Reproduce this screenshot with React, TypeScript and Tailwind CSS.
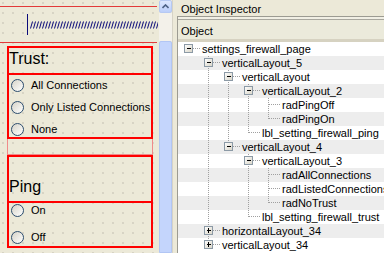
import React from "react";

type Node = { label: string; level: number; box: "" | "-" | "+" };

const tree: Node[] = [
  { label: "settings_firewall_page", level: 0, box: "-" },
  { label: "verticalLayout_5", level: 1, box: "-" },
  { label: "verticalLayout", level: 2, box: "-" },
  { label: "verticalLayout_2", level: 3, box: "-" },
  { label: "radPingOff", level: 4, box: "" },
  { label: "radPingOn", level: 4, box: "" },
  { label: "lbl_setting_firewall_ping", level: 3, box: "" },
  { label: "verticalLayout_4", level: 2, box: "-" },
  { label: "verticalLayout_3", level: 3, box: "-" },
  { label: "radAllConnections", level: 4, box: "" },
  { label: "radListedConnections", level: 4, box: "" },
  { label: "radNoTrust", level: 4, box: "" },
  { label: "lbl_setting_firewall_trust", level: 3, box: "" },
  { label: "horizontalLayout_34", level: 1, box: "+" },
  { label: "verticalLayout_34", level: 1, box: "+" },
];

// true when a later row sits at the same level before the tree climbs out
const hasNextSibling = (i: number) => {
  for (let j = i + 1; j < tree.length; j++) {
    if (tree[j].level < tree[i].level) return false;
    if (tree[j].level === tree[i].level) return true;
  }
  return false;
};

const ancestorAt = (i: number, level: number) => {
  for (let j = i - 1; j >= 0; j--) if (tree[j].level === level) return j;
  return -1;
};

function Branches({ index }: { index: number }) {
  const { level, box } = tree[index];
  const width = 24 + level * 20;
  const cx = 10 + level * 20;
  const dot = { stroke: "#a0a0a0", strokeDasharray: "1 1", shapeRendering: "crispEdges" as const };
  const lines: React.ReactNode[] = [];

  for (let k = 1; k < level; k++) {
    const a = ancestorAt(index, k);
    if (a >= 0 && hasNextSibling(a)) {
      const x = 10 + k * 20 + 0.5;
      lines.push(<line key={`a${k}`} x1={x} y1={0} x2={x} y2={14} {...dot} />);
    }
  }
  if (level > 0) {
    const x = cx + 0.5;
    lines.push(<line key="v" x1={x} y1={0} x2={x} y2={hasNextSibling(index) ? 14 : 7} {...dot} />);
  }
  lines.push(<line key="h" x1={box ? cx + 5 : cx + 1} y1={6.5} x2={width - 2} y2={6.5} {...dot} />);

  return (
    <svg width={width} height={14} className="shrink-0">
      <defs>
        <linearGradient id="bx" x1="0" y1="0" x2="1" y2="1">
          <stop offset="0" stopColor="#ffffff" />
          <stop offset="1" stopColor="#d8d4c6" />
        </linearGradient>
      </defs>
      {lines}
      {box && (
        <g shapeRendering="crispEdges">
          <rect x={cx - 3.5} y={2.5} width={8} height={8} fill="url(#bx)" stroke="#8c9aa6" />
          <line x1={cx - 1} y1={6.5} x2={cx + 3} y2={6.5} stroke="#000" />
          {box === "+" && <line x1={cx + 0.5} y1={4} x2={cx + 0.5} y2={9} stroke="#000" />}
        </g>
      )}
    </svg>
  );
}

function Radio({ label }: { label: string }) {
  return (
    <div className="flex items-center gap-[7px] pl-[2px]">
      <div className="w-[13px] h-[13px] rounded-full border border-[#2c4d6e] bg-linear-to-br from-[#d6d3c8] to-white shrink-0" />
      <span className="text-[11px] leading-[13px]">{label}</span>
    </div>
  );
}

function Spring() {
  const marks = [];
  for (let x = 0; x < 128; x += 3) {
    marks.push(<line key={x} x1={x + 0.5} y1={7.5} x2={x + 2.5} y2={0.5} stroke="#0a0a7a" strokeWidth={1} />);
  }
  return (
    <svg width={128} height={8} className="shrink-0">
      {marks}
    </svg>
  );
}

export default function App() {
  return (
    <div className="w-[384px] h-[253px] overflow-hidden flex bg-[#ece9d8] text-black font-['Liberation_Sans',Arial,sans-serif]">
      {/* form canvas */}
      <div className="w-[159px] shrink-0 flex flex-col bg-[radial-gradient(circle,#bebbae_0.6px,transparent_0.8px)] bg-[size:10px_10px] bg-[position:-2px_-2px]">
        <div className="h-[6px]" />
        <div className="h-px w-[157px] bg-[#e23a3a]" />
        <div className="h-[35px] flex items-center pl-[27px]">
          <div className="w-px h-[21px] bg-[#0a0a7a]" />
          <div className="ml-[2px]">
            <Spring />
          </div>
        </div>
        <div className="h-px w-[157px] bg-[#e23a3a]" />
        <div className="h-[3px]" />

        {/* trust group */}
        <div className="ml-[7px] w-[146px] h-[109px] border border-[#f08a8a] flex flex-col">
          <div className="-mx-px -mt-px h-[27px] border-2 border-b-0 border-[#ff0000] pt-[2px] text-[16px] leading-[18px] shrink-0">
            Trust:
          </div>
          <div className="-mx-px h-[66px] border-2 border-[#ff0000] flex flex-col gap-[2px] shrink-0">
            <div className="h-[20px] shrink-0 flex items-center"><Radio label="All Connections" /></div>
            <div className="h-[20px] shrink-0 flex items-center"><Radio label="Only Listed Connections" /></div>
            <div className="h-[20px] shrink-0 flex items-center"><Radio label="None" /></div>
          </div>
        </div>

        {/* ping group */}
        <div className="ml-[7px] w-[146px] flex flex-col">
          <div className="h-[46px] border-2 border-b-0 border-[#ff0000] pt-[21px] text-[16px] leading-[18px] shrink-0">
            Ping
          </div>
          <div className="h-[47px] border-2 border-[#ff0000] flex flex-col shrink-0">
            <div className="h-[14px] shrink-0 flex items-center"><Radio label="On" /></div>
            <div className="h-[14px] mt-[13px] shrink-0 flex items-center"><Radio label="Off" /></div>
          </div>
        </div>
      </div>

      {/* scrollbar */}
      <div className="w-[14px] shrink-0 flex flex-col border-r border-[#d6d3c6]">
        <div className="h-[13px] rounded-[2px] border border-[#b6c9f3] bg-linear-to-b from-[#dde7fe] to-[#bccffa] flex items-center justify-center">
          <svg width="7" height="5">
            <path d="M0.5 4 L3.5 1 L6.5 4" fill="none" stroke="#4d6185" strokeWidth="1.6" />
          </svg>
        </div>
        <div className="h-[28px] bg-[#f3f1ea]" />
        <div className="flex-1 rounded-t-[2px] border border-[#b2c6f4] bg-[#c4d5fc]" />
      </div>

      {/* object inspector */}
      <div className="flex-1 flex flex-col pl-[4px] text-[11px]">
        <div className="h-[16px] pl-[4px] pt-[3px] leading-[13px] shrink-0">Object Inspector</div>
        <div className="flex-1 flex flex-col border-l border-t border-[#9c9b92] bg-white">
          <div className="h-[3px] bg-[#f1efe4] border-b border-[#a8a79e] shrink-0" />
          <div className="h-[22px] pl-[3px] pt-[5px] leading-[13px] bg-[#ebeadb] border-b-[3px] border-[#d6d2c1] shrink-0">
            Object
          </div>
          <div className="flex flex-col">
            {tree.map((n, i) => (
              <div key={n.label} className={`h-[14px] flex items-center ${i % 2 === 1 ? "bg-[#ededed]" : "bg-white"}`}>
                <Branches index={i} />
                <span className="leading-[14px] whitespace-nowrap">{n.label}</span>
              </div>
            ))}
          </div>
        </div>
      </div>
    </div>
  );
}
